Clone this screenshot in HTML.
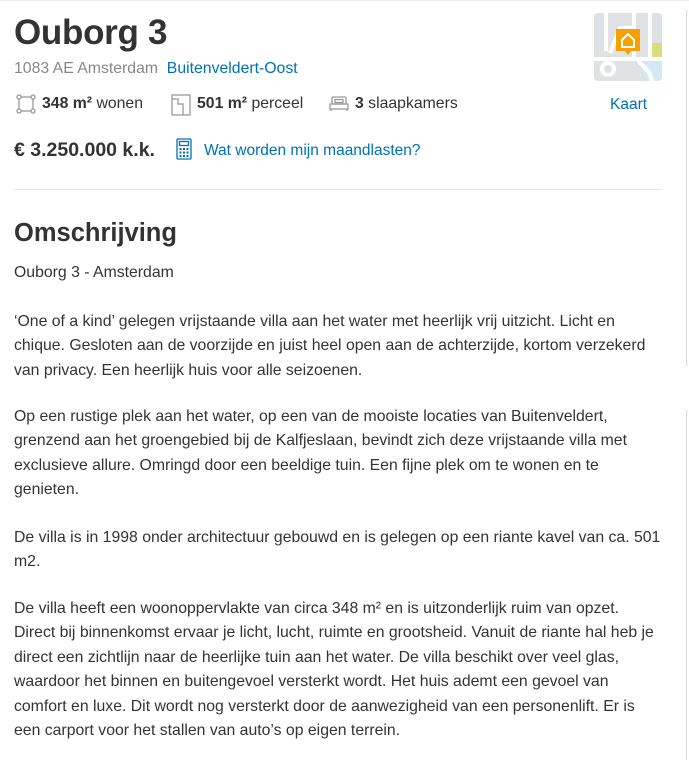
<!DOCTYPE html>
<html><head><meta charset="utf-8"><style>
*{margin:0;padding:0;box-sizing:border-box}
body{width:689px;height:760px;overflow:hidden;background:#fff;font-family:"Liberation Sans",sans-serif;color:#333;position:relative}
.a{position:absolute;white-space:nowrap}
h1{font-size:35px;font-weight:bold;color:#333;letter-spacing:-0.3px}
.blue{color:#0071b3}
.p{font-size:15.8px;line-height:24.4px;color:#333}
</style></head><body>
<div class="a" style="left:0;top:0;width:689px;height:1px;background:#eee"></div>
<h1 class="a" style="left:14px;top:13px">Ouborg 3</h1>
<div class="a" style="left:14px;top:60px;font-size:15.8px;color:#888">1083 AE Amsterdam&nbsp; <span class="blue">Buitenveldert-Oost</span></div>

<svg class="a" style="left:16px;top:94px" width="20" height="20" viewBox="0 0 20 20" fill="none" stroke="#999" stroke-width="1.3"><rect x="3" y="3" width="14" height="14"/><circle cx="3" cy="3" r="2" fill="#fff"/><circle cx="17" cy="3" r="2" fill="#fff"/><circle cx="3" cy="17" r="2" fill="#fff"/><circle cx="17" cy="17" r="2" fill="#fff"/></svg>
<div class="a" style="left:42px;top:95px;font-size:15.8px"><b>348 m²</b> wonen</div>
<svg class="a" style="left:171px;top:94px" width="20" height="22" viewBox="0 0 20 22" fill="none" stroke="#999" stroke-width="1.3"><rect x="1" y="1" width="18" height="20"/><path d="M1 5h6v5h5v11"/></svg>
<div class="a" style="left:197px;top:95px;font-size:15.8px"><b>501 m²</b> perceel</div>
<svg class="a" style="left:329px;top:96px" width="20" height="16" viewBox="0 0 20 16" fill="none" stroke="#999" stroke-width="1.3"><rect x="3" y="1" width="14" height="7" rx="1"/><rect x="6" y="3.5" width="8" height="3"/><rect x="1" y="8" width="18" height="5"/><path d="M2 13v2M18 13v2"/></svg>
<div class="a" style="left:355px;top:95px;font-size:15.8px"><b>3</b> slaapkamers</div>

<div class="a" style="left:14px;top:139px;font-size:19.5px;font-weight:bold">€ 3.250.000 k.k.</div>
<svg class="a" style="left:176px;top:138px" width="16" height="22" viewBox="0 0 16 22" fill="none" stroke="#0071b3" stroke-width="1.3"><rect x="1" y="1" width="14" height="20" rx="1"/><rect x="3.5" y="3.5" width="9" height="4"/><g fill="#0071b3" stroke="none"><rect x="3.5" y="10" width="2" height="2"/><rect x="7" y="10" width="2" height="2"/><rect x="10.5" y="10" width="2" height="2"/><rect x="3.5" y="13.5" width="2" height="2"/><rect x="7" y="13.5" width="2" height="2"/><rect x="10.5" y="13.5" width="2" height="2"/><rect x="3.5" y="17" width="2" height="2"/><rect x="7" y="17" width="2" height="2"/><rect x="10.5" y="17" width="2" height="2"/></g></svg>
<div class="a blue" style="left:204px;top:142px;font-size:15.5px">Wat worden mijn maandlasten?</div>

<svg class="a" style="left:594px;top:13px" width="68" height="68" viewBox="0 0 68 68"><defs><clipPath id="c"><rect width="68" height="68" rx="4"/></clipPath></defs><g clip-path="url(#c)"><rect width="68" height="68" fill="#dfe2e4"/><path d="M45 48h23v20H52z" fill="#d3e8f2"/><rect x="58" y="30" width="10" height="14" fill="#d6df7a"/><g stroke="#fff" stroke-width="4" fill="none"><path d="M0 46h68"/><path d="M12 0v38M40 0v48M56 0v44"/><path d="M16 40l10-25h14"/><path d="M44 48c6 6 12 10 14 20"/><circle cx="14" cy="56" r="6"/></g></g><path d="M22 16h24v22H37l-3 4-3-4h-9z" fill="#f7a100"/><path d="M28 27l6-6 6 6v7H28z" fill="none" stroke="#fff" stroke-width="2"/></svg>
<div class="a blue" style="left:610px;top:96px;font-size:15.5px">Kaart</div>
<div class="a" style="left:686px;top:10px;width:1px;height:356px;background:#ddd"></div>
<div class="a" style="left:686px;top:410px;width:1px;height:350px;background:#ddd"></div>

<div class="a" style="left:14px;top:189px;width:648px;height:1px;background:#e5e5e5"></div>
<div class="a" style="left:14px;top:219px;font-size:25.5px;font-weight:bold">Omschrijving</div>
<div class="a p" style="left:14px;top:261px">Ouborg 3 - Amsterdam</div>
<div class="a p" style="left:14px;top:310px">‘One of a kind’ gelegen vrijstaande villa aan het water met heerlijk vrij uitzicht. Licht en<br>chique. Gesloten aan de voorzijde en juist heel open aan de achterzijde, kortom verzekerd<br>van privacy. Een heerlijk huis voor alle seizoenen.</div>
<div class="a p" style="left:14px;top:405px">Op een rustige plek aan het water, op een van de mooiste locaties van Buitenveldert,<br>grenzend aan het groengebied bij de Kalfjeslaan, bevindt zich deze vrijstaande villa met<br>exclusieve allure. Omringd door een beeldige tuin. Een fijne plek om te wonen en te<br>genieten.</div>
<div class="a p" style="left:14px;top:526px">De villa is in 1998 onder architectuur gebouwd en is gelegen op een riante kavel van ca. 501<br>m2.</div>
<div class="a p" style="left:14px;top:597px">De villa heeft een woonoppervlakte van circa 348 m² en is uitzonderlijk ruim van opzet.<br>Direct bij binnenkomst ervaar je licht, lucht, ruimte en grootsheid. Vanuit de riante hal heb je<br>direct een zichtlijn naar de heerlijke tuin aan het water. De villa beschikt over veel glas,<br>waardoor het binnen en buitengevoel versterkt wordt. Het huis ademt een gevoel van<br>comfort en luxe. Dit wordt nog versterkt door de aanwezigheid van een personenlift. Er is<br>een carport voor het stallen van auto’s op eigen terrein.</div>
</body></html>
